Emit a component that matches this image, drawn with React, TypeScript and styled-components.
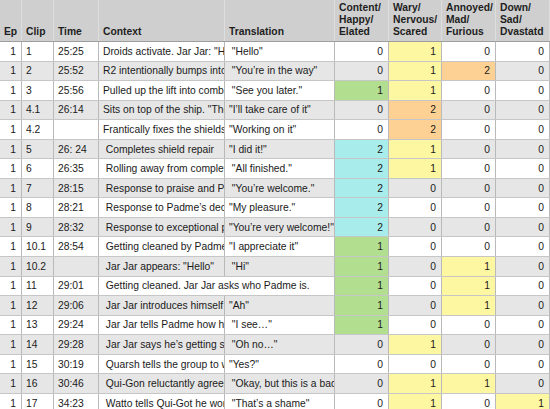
import React from 'react'
import styled, { createGlobalStyle } from 'styled-components'

const GlobalStyle = createGlobalStyle`
    html, body {
        margin: 0;
        padding: 0;
        background: #ffffff;
        overflow: hidden;
    }
    body {
        font-family: 'Liberation Sans', Arial, sans-serif;
        color: #1a1a1a;
    }
`

const COLS = '22px 32px 45px 126px 110px 54px 53px 54px 54px'

const FILLS: Record<string, string> = {
    yellow: '#fef7a2',
    orange: '#fdd193',
    green: '#b2de90',
    cyan: '#a8ecec',
}

type Score = [number, string?]

type Clip = {
    ep: string
    clip: string
    time: string
    context: string
    translation: string
    scores: Score[]
}

const rows: Clip[] = [
    {ep: '1', clip: '1', time: '25:25', context: 'Droids activate. Jar Jar: "Hello"', translation: ' "Hello"', scores: [[0], [1, 'yellow'], [0], [0]]},
    {ep: '1', clip: '2', time: '25:52', context: 'R2 intentionally bumps into Jar Jar', translation: ' "You\u2019re in the way"', scores: [[0], [1, 'yellow'], [2, 'orange'], [0]]},
    {ep: '1', clip: '3', time: '25:56', context: 'Pulled up the lift into combat', translation: ' "See you later."', scores: [[1, 'green'], [1, 'yellow'], [0], [0]]},
    {ep: '1', clip: '4.1', time: '26:14', context: 'Sits on top of the ship. "The shields"', translation: '"I\u2019ll take care of it"', scores: [[0], [2, 'orange'], [0], [0]]},
    {ep: '1', clip: '4.2', time: '', context: 'Frantically fixes the shields', translation: '"Working on it"', scores: [[0], [2, 'orange'], [0], [0]]},
    {ep: '1', clip: '5', time: '26: 24', context: ' Completes shield repair', translation: '"I did it!"', scores: [[2, 'cyan'], [1, 'yellow'], [0], [0]]},
    {ep: '1', clip: '6', time: '26:35', context: ' Rolling away from completed repair', translation: ' "All finished."', scores: [[2, 'cyan'], [1, 'yellow'], [0], [0]]},
    {ep: '1', clip: '7', time: '28:15', context: ' Response to praise and Padme', translation: ' "You\u2019re welcome."', scores: [[2, 'cyan'], [0], [0], [0]]},
    {ep: '1', clip: '8', time: '28:21', context: ' Response to Padme\u2019s decision', translation: '"My pleasure."', scores: [[2, 'cyan'], [0], [0], [0]]},
    {ep: '1', clip: '9', time: '28:32', context: ' Response to exceptional praise', translation: '"You\u2019re very welcome!"', scores: [[2, 'cyan'], [0], [0], [0]]},
    {ep: '1', clip: '10.1', time: '28:54', context: ' Getting cleaned by Padme', translation: '"I appreciate it"', scores: [[1, 'green'], [0], [0], [0]]},
    {ep: '1', clip: '10.2', time: '', context: ' Jar Jar appears: "Hello"', translation: ' "Hi"', scores: [[1, 'green'], [0], [1, 'yellow'], [0]]},
    {ep: '1', clip: '11', time: '29:01', context: ' Getting cleaned. Jar Jar asks who Padme is.', translation: '', scores: [[1, 'green'], [0], [1, 'yellow'], [0]]},
    {ep: '1', clip: '12', time: '29:06', context: ' Jar Jar introduces himself to Padme', translation: '"Ah"', scores: [[1, 'green'], [0], [1, 'yellow'], [0]]},
    {ep: '1', clip: '13', time: '29:24', context: ' Jar Jar tells Padme how he was banished', translation: ' "I see\u2026"', scores: [[1, 'green'], [0], [0], [0]]},
    {ep: '1', clip: '14', time: '29:28', context: ' Jar Jar says he\u2019s getting scared', translation: ' "Oh no\u2026"', scores: [[0], [1, 'yellow'], [0], [0]]},
    {ep: '1', clip: '15', time: '30:19', context: ' Quarsh tells the group to wait', translation: '"Yes?"', scores: [[0], [0], [0], [0]]},
    {ep: '1', clip: '16', time: '30:46', context: ' Qui-Gon reluctantly agrees', translation: ' "Okay, but this is a bad idea"', scores: [[0], [1, 'yellow'], [1, 'yellow'], [0]]},
    {ep: '1', clip: '17', time: '34:23', context: ' Watto tells Qui-Got he won\u2019t', translation: ' "That\u2019s a shame"', scores: [[0], [1, 'yellow'], [0], [1, 'yellow']]},
]

const headers = ['Ep', 'Clip', 'Time', 'Context', 'Translation', 'Content/\nHappy/\nElated', 'Wary/\nNervous/\nScared', 'Annoyed/\nMad/\nFurious', 'Down/\nSad/\nDvastatd']

export default function App() {
    return (
        <>
            <GlobalStyle />
            <Sheet>
                <HeaderRow>
                    {headers.map(h => <HeadCell key={h}>{h}</HeadCell>)}
                </HeaderRow>
                {rows.map((row, i) => (
                    <Row key={row.clip} $shaded={i % 2 === 1}>
                        <Cell $align="right">{row.ep}</Cell>
                        <Cell>{row.clip}</Cell>
                        <Cell>{row.time}</Cell>
                        <Cell $spill={!row.translation}>{row.context}</Cell>
                        <Cell>{row.translation}</Cell>
                        {row.scores.map(([value, fill], j) => (
                            <Cell key={j} $align="right" $fill={fill ? FILLS[fill] : undefined}>{value}</Cell>
                        ))}
                    </Row>
                ))}
            </Sheet>
        </>
    )
}

const Sheet = styled.div`
    width: 550px;
    height: 409px;
    overflow: hidden;
    font-size: 10.3px;
`

const HeaderRow = styled.div`
    display: grid;
    grid-template-columns: ${COLS};
    height: 42px;
    box-sizing: border-box;
    background: #cfcfcf;
    border-bottom: 1px solid #9d9d9d;
`

const HeadCell = styled.div`
    display: flex;
    align-items: flex-end;
    padding: 0 3px 3px 4px;
    box-sizing: border-box;
    border-right: 1px solid #dedede;
    font-weight: bold;
    line-height: 12px;
    white-space: pre;
    color: #1e1e1e;
    overflow: hidden;
`

const Row = styled.div<{ $shaded: boolean }>`
    display: grid;
    grid-template-columns: ${COLS};
    height: 19.55px;
    box-sizing: border-box;
    background: ${p => (p.$shaded ? '#e6e6e6' : '#ffffff')};
    border-bottom: 1px solid #c6c6c6;
`

const Cell = styled.div<{ $align?: 'left' | 'right'; $fill?: string; $spill?: boolean }>`
    display: flex;
    align-items: center;
    justify-content: ${p => (p.$align === 'right' ? 'flex-end' : 'flex-start')};
    padding: 0 5px 0 4px;
    box-sizing: border-box;
    background: ${p => p.$fill || 'transparent'};
    border-right: ${p => (p.$spill ? 'none' : '1px solid #b9b9b9')};
    white-space: pre;
    overflow: ${p => (p.$spill ? 'visible' : 'hidden')};
    position: ${p => (p.$spill ? 'relative' : 'static')};
    z-index: ${p => (p.$spill ? 1 : 'auto')};
    min-width: 0;
`
